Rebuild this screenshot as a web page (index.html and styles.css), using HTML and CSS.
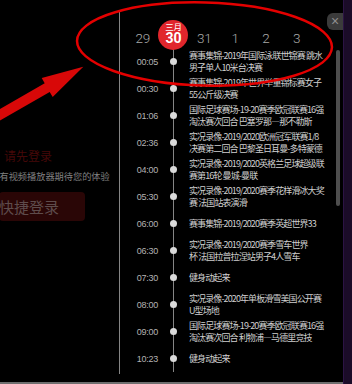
FILE: index.html
```html
<!DOCTYPE html>
<html lang="zh-CN">
<head>
<meta charset="utf-8">
<title>节目单</title>
<link rel="stylesheet" href="styles.css">
</head>
<body>
<div class="screen">
  <div class="panel">
    <div class="content">
      <section class="login">
        <p class="login-title">请先登录</p>
        <p class="login-desc">有视频播放器期待您的体验</p>
        <button class="login-btn">快捷登录</button>
      </section>
      <div class="divider"></div>
      <section class="schedule">
        <div class="dates">
          <span class="date">29</span>
          <span class="date active"><span class="badge"><span class="badge-month">三月</span><span class="badge-day">30</span></span></span>
          <span class="date">31</span>
          <span class="date">1</span>
          <span class="date">2</span>
          <span class="date">3</span>
        </div>
        <ul class="timeline">
          <li class="item"><span class="time">00:05</span><span class="node"><i class="dot"></i></span><span class="title">赛事集锦-2019年国际泳联世锦赛 跳水<br>男子单人10米台决赛</span></li>
          <li class="item"><span class="time">00:30</span><span class="node"><i class="dot"></i></span><span class="title">赛事集锦-2019年世界举重锦标赛女子<br>55公斤级决赛</span></li>
          <li class="item"><span class="time">01:06</span><span class="node"><i class="dot"></i></span><span class="title">国际足球赛场-19-20赛季欧冠联赛16强<br>淘汰赛次回合 巴塞罗那—那不勒斯</span></li>
          <li class="item"><span class="time">02:36</span><span class="node"><i class="dot"></i></span><span class="title">实况录像-2019/2020欧洲冠军联赛1/8<br>决赛第二回合 巴黎圣日耳曼-多特蒙德</span></li>
          <li class="item"><span class="time">04:00</span><span class="node"><i class="dot"></i></span><span class="title">实况录像-2019/2020英格兰足球超级联<br>赛第16轮 曼城-曼联</span></li>
          <li class="item"><span class="time">05:30</span><span class="node"><i class="dot"></i></span><span class="title">实况录像-2019/2020赛季花样滑冰大奖<br>赛 法国站表演滑</span></li>
          <li class="item"><span class="time">06:00</span><span class="node"><i class="dot"></i></span><span class="title">赛事集锦-2019/2020赛季英超世界33</span></li>
          <li class="item"><span class="time">06:30</span><span class="node"><i class="dot"></i></span><span class="title">实况录像-2019/2020赛季雪车世界<br>杯 法国拉普拉涅站男子4人雪车</span></li>
          <li class="item"><span class="time">07:30</span><span class="node"><i class="dot"></i></span><span class="title">健身动起来</span></li>
          <li class="item"><span class="time">08:00</span><span class="node"><i class="dot"></i></span><span class="title">实况录像-2020年单板滑雪美国公开赛<br>U型场地</span></li>
          <li class="item"><span class="time">09:00</span><span class="node"><i class="dot"></i></span><span class="title">国际足球赛场-19-20赛季欧冠联赛16强<br>淘汰赛次回合 利物浦—马德里竞技</span></li>
          <li class="item"><span class="time">10:23</span><span class="node"><i class="dot"></i></span><span class="title">健身动起来</span></li>
        </ul>
      </section>
    </div>
    <div class="baseline"></div>
  </div>
  <div class="strip"></div>
  <button class="close">×</button>
  <div class="scroll-thumb"></div>
  <svg class="annot" width="352" height="384" viewBox="0 0 352 384">
    <ellipse cx="204.5" cy="44" rx="127.5" ry="41.5" transform="rotate(1.5 204.5 44)" fill="none" stroke="#e40000" stroke-width="2.5"/>
    <polygon points="-15.9,118.2 44.7,83.2 41.7,78 83.3,66.7 52.7,97.1 49.7,91.9 -10.9,126.9" fill="#d80808"/>
  </svg>
</div>
</body>
</html>
```

FILE: styles.css
```css
* { box-sizing: border-box; }
html, body { margin: 0; padding: 0; background: #000; }
body { width: 352px; height: 384px; overflow: hidden; font-family: "Noto Sans CJK SC", "Noto Sans", sans-serif; }

.screen { position: relative; width: 352px; height: 384px; display: flex; background: #000; }

.panel { width: 343px; display: flex; flex-direction: column; }
.content { height: 382px; display: flex; }
.baseline { height: 2px; background: #6e6e6e; }

.strip { width: 9px; background: #1b0c28; border-left: 1px solid #2c1444; }

/* left login block */
.login { width: 119px; overflow: hidden; padding-top: 150px; }
.login-title { margin: 0 0 0 4px; font-size: 12px; line-height: 12px; color: #450808; white-space: nowrap; }
.login-desc { margin: 8px 0 0 -0.5px; font-size: 9.2px; line-height: 12px; color: #808080; white-space: nowrap; letter-spacing: 0; }
.login-btn { display: block; margin: 10px 0 0 -1px; width: 86px; height: 29px; padding: 0; border: none; border-radius: 4px; background: #2a0606; color: #5e4c4c; font-family: "Noto Sans CJK SC", sans-serif; font-size: 15px; line-height: 29px; text-align: left; white-space: nowrap; }

.divider { width: 1px; background: #858585; margin: 12px 0 8px; }

/* schedule */
.schedule { flex: 1; min-width: 0; }

.dates { height: 48px; padding: 20px 0 0 7.3px; display: flex; align-items: flex-start; position: relative; z-index: 1; }
.date { width: 30.8px; height: 30px; padding-top: 5px; display: flex; align-items: center; justify-content: center; font-family: Roboto, "Liberation Sans", sans-serif; font-weight: 300; font-size: 13.5px; color: #a9a9a9; letter-spacing: -0.3px; }
.date.active { padding-top: 0; }
.badge { width: 30px; height: 30px; border-radius: 50%; background: #e1262c; display: flex; flex-direction: column; align-items: center; padding-top: 2px; color: #fff; }
.badge-month { font-family: "Noto Sans CJK SC", sans-serif; font-size: 8.5px; line-height: 9.5px; font-weight: 400; }
.badge-day { font-family: Roboto, "Liberation Sans", sans-serif; font-size: 14px; line-height: 13.5px; font-weight: 700; letter-spacing: 0; }

.timeline { list-style: none; margin: 0; padding: 0; }
.item { height: 27px; display: grid; grid-template-columns: 38px 31px 1fr; align-items: center; }
.time { text-align: right; font-family: "Liberation Sans", Arial, sans-serif; font-size: 9px; letter-spacing: -0.25px; color: #b3b3b3; }
.node { height: 27px; display: flex; align-items: center; justify-content: center; background: linear-gradient(#858585, #858585) center / 1px 100% no-repeat; }
.dot { display: block; width: 7px; height: 7px; border-radius: 50%; background: #dadada; }
.title { font-size: 9px; line-height: 12.5px; letter-spacing: -0.9px; color: #cfcfcf; white-space: nowrap; padding-top: 1.5px; }

/* overlays */
.close { position: absolute; left: 327px; top: 13px; width: 16px; height: 17px; padding: 0; border: none; border-radius: 6px 0 0 6px; background: #3b3b3b; color: #8e8e8e; font-family: "Liberation Sans", Arial, sans-serif; font-size: 14px; line-height: 17px; text-align: center; }
.scroll-thumb { position: absolute; left: 336px; top: 50px; width: 3.5px; height: 156px; border-radius: 2px; background: #4e4e4e; }
.annot { position: absolute; left: 0; top: 0; pointer-events: none; }
```
